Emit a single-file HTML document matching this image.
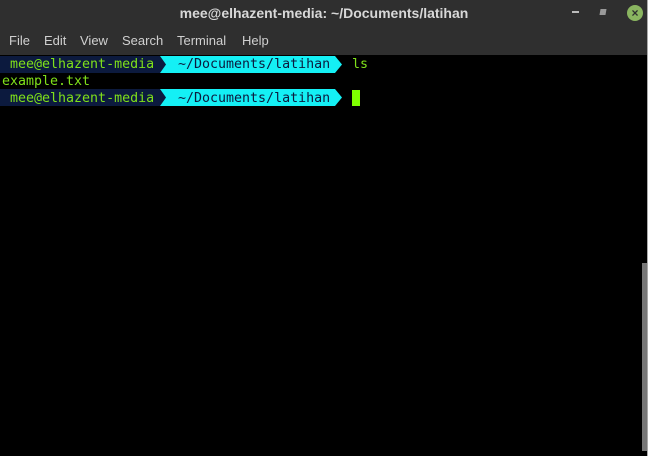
<!DOCTYPE html>
<html><head><style>
body{margin:0;width:648px;height:456px;overflow:hidden;background:#000;font-family:"Liberation Sans",sans-serif;position:relative}
#title{position:absolute;left:0;top:0;width:648px;height:27px;background:#2f2f2f;color:#d8d8d8;font-weight:bold;font-size:14px;text-align:center;line-height:26px}
#menu{position:absolute;left:0;top:27px;width:648px;height:28px;background:#2f2f2f;color:#d0d0d0;font-size:13px;line-height:28px}
#menu span{position:absolute}
.row{position:absolute;left:0;height:17px;font-family:"DejaVu Sans Mono","Liberation Mono",monospace;font-size:13.3px;line-height:17px;white-space:pre}
.t{position:absolute;top:0}
.g{color:#7fe01a}
svg{position:absolute;left:0;top:0}
</style></head><body>
<div id="title">mee@elhazent-media: ~/Documents/latihan</div>
<div style="position:absolute;left:572px;top:11px;width:7px;height:2px;background:#bbb"></div>
<div style="position:absolute;left:600px;top:9px;width:6px;height:6px;background:#999;transform:skew(-10deg)"></div>
<div style="position:absolute;left:627px;top:5px;width:16px;height:16px;border-radius:50%;background:#8ab560;color:#2f2f2f;font-size:12px;line-height:16px;text-align:center;font-weight:bold">×</div>
<div id="menu"><span style="left:9px">File</span><span style="left:44px">Edit</span><span style="left:80px">View</span><span style="left:122px">Search</span><span style="left:177px">Terminal</span><span style="left:242px">Help</span></div>
<svg width="648" height="456">
<polygon points="0,56 160,56 166,64.5 160,73 0,73" fill="#0c1a3e"/>
<polygon points="160,56 335,56 342,64.5 335,73 160,73 166,64.5" fill="#14f0f5"/>
<polygon points="0,89 160,89 166,97.5 160,106 0,106" fill="#0c1a3e"/>
<polygon points="160,89 335,89 342,97.5 335,106 160,106 166,97.5" fill="#14f0f5"/>
<rect x="352" y="90" width="8" height="16" fill="#7fff00"/>
<rect x="642" y="263" width="5" height="188" fill="#777"/>
<rect x="647" y="0" width="1" height="456" fill="#aaa"/>
</svg>
<div class="row" style="top:56px"><span class="t g" style="left:10px">mee@elhazent-media</span><span class="t" style="left:178px;color:#0c1a3e">~/Documents/latihan</span><span class="t g" style="left:352px">ls</span></div>
<div class="row" style="top:73px"><span class="t g" style="left:2px">example.txt</span></div>
<div class="row" style="top:90px"><span class="t g" style="left:10px">mee@elhazent-media</span><span class="t" style="left:178px;color:#0c1a3e">~/Documents/latihan</span></div>
</body></html>
